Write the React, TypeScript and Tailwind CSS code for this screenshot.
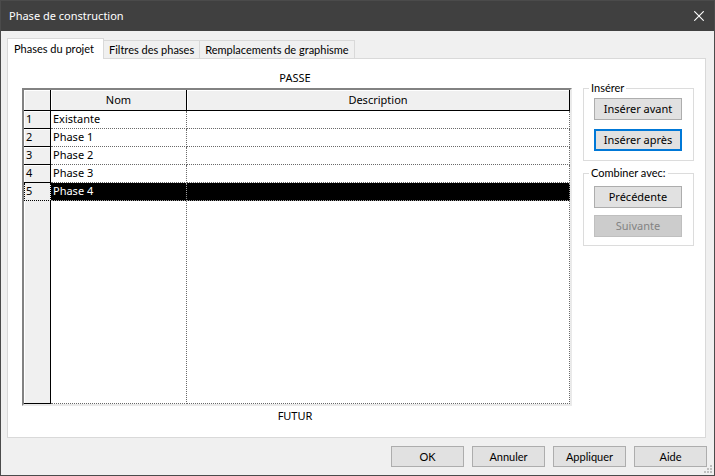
import { useState } from 'react'
import clsx from 'clsx'

const TABS = ['Phases du projet', 'Filtres des phases', 'Remplacements de graphisme']

const PHASES = [
  { name: 'Existante', description: '' },
  { name: 'Phase 1', description: '' },
  { name: 'Phase 2', description: '' },
  { name: 'Phase 3', description: '' },
  { name: 'Phase 4', description: '' },
]

interface DialogButtonProps {
  label: string
  className?: string
  focused?: boolean
  disabled?: boolean
}

function DialogButton({ label, className, focused, disabled }: DialogButtonProps) {
  return (
    <button
      type="button"
      disabled={disabled}
      className={clsx(
        'flex items-center justify-center bg-[#e1e1e1] whitespace-nowrap disabled:border-[#bfbfbf] disabled:bg-[#cccccc] disabled:text-[#838383]',
        focused ? 'border-2 border-[#0078d7]' : 'border border-[#adadad]',
        className,
      )}
    >
      {label}
    </button>
  )
}

function PhaseTable() {
  const [selected, setSelected] = useState(4)

  return (
    <div className="min-h-0 flex-1 border-2 border-t-[#828282] border-r-[#eaeaea] border-b-[#eaeaea] border-l-[#828282]">
      <table className="h-full w-full table-fixed border-separate border-spacing-0">
        <colgroup>
          <col className="w-[27px]" />
          <col className="w-[136px]" />
          <col />
        </colgroup>
        <thead>
          <tr className="h-[21px] bg-[#f0f0f0]">
            <td className="border-r border-b border-black shadow-[inset_1px_1px_0_white]" />
            <th scope="col" className="border-r border-b border-black p-0 font-normal shadow-[inset_1px_1px_0_white]">
              Nom
            </th>
            <th scope="col" className="border-r border-b border-black p-0 font-normal shadow-[inset_1px_1px_0_white]">
              Description
            </th>
          </tr>
        </thead>
        <tbody>
          {PHASES.map((phase, i) => {
            const active = i === selected
            return (
              <tr key={phase.name} onClick={() => setSelected(i)} className="h-[18px] align-top">
                <th
                  scope="row"
                  className={clsx(
                    'border-r border-b border-black bg-[#f0f0f0] p-0 text-left font-normal',
                    active ? 'border-l border-dotted pl-px' : 'pl-0.5 shadow-[inset_1px_1px_0_white]',
                  )}
                >
                  {i + 1}
                </th>
                <td
                  className={clsx(
                    'border-r border-b border-dotted p-0 pl-0.5',
                    active ? 'border-[#a0a0a0] bg-black text-white' : 'border-[#696969]',
                  )}
                >
                  {phase.name}
                </td>
                <td
                  className={clsx(
                    'border-r border-b border-dotted p-0 pl-0.5',
                    active ? 'border-[#a0a0a0] bg-black text-white' : 'border-[#696969]',
                  )}
                >
                  {phase.description}
                </td>
              </tr>
            )
          })}
          {/* empty area under the last phase */}
          <tr>
            <td className="border-r border-b border-black bg-[#f0f0f0] shadow-[inset_1px_0_0_white]" />
            <td className="border-r border-b border-dotted border-[#696969]" />
            <td className="border-r border-b border-dotted border-[#696969]" />
          </tr>
        </tbody>
      </table>
    </div>
  )
}

export default function App() {
  const [tab, setTab] = useState(0)

  return (
    <div className="relative flex h-screen flex-col border border-[#4b4b4b] bg-[#f0f0f0] font-['Noto_Sans','Open_Sans',sans-serif] text-[11px] leading-4 text-black">
      {/* Title bar */}
      <header className="flex h-[30px] shrink-0 items-center justify-between bg-[#404040] pr-2.5 pl-2 text-white">
        <h1>Phase de construction</h1>
        <button type="button" aria-label="Fermer">
          <svg width="10" height="10" viewBox="0 0 10 10" fill="none" stroke="currentColor" strokeWidth="1.1">
            <path d="M0.3 0.3L9.7 9.7M9.7 0.3L0.3 9.7" />
          </svg>
        </button>
      </header>

      <main className="flex min-h-0 flex-1 flex-col pt-[7px] pr-2 pl-1.5">
        <div role="tablist" className="z-10 flex items-end font-['Lato',sans-serif]">
          {TABS.map((label, i) => (
            <button
              key={label}
              type="button"
              role="tab"
              aria-selected={tab === i}
              onClick={() => setTab(i)}
              className={clsx(
                'border-t border-r border-[#d9d9d9] whitespace-nowrap',
                i === 0 && 'border-l',
                tab === i ? '-mb-px h-[21px] bg-white pr-[9px] pl-1.5' : 'h-[18px] px-[5px]',
              )}
            >
              {label}
            </button>
          ))}
        </div>

        <div role="tabpanel" className="flex min-h-0 flex-1 gap-[11px] border border-[#d9d9d9] bg-white pt-[11px] pr-[11px] pl-3.5">
          <section className="flex min-w-0 flex-1 flex-col pb-[13px]">
            <p className="mb-0.5 pr-1 text-center">PASSE</p>
            <PhaseTable />
            <p className="mt-0.5 pr-1 text-center">FUTUR</p>
          </section>

          <aside className="flex w-[111px] flex-col gap-1 pt-2.5">
            <fieldset className="border border-[#dcdcdc] pt-0.5 pr-[11px] pb-[9px] pl-2.5">
              <legend className="-ml-[5px] px-0.5 font-['Lato',sans-serif]">Insérer</legend>
              <div className="flex flex-col gap-[9px]">
                <DialogButton label="Insérer avant" className="h-[22px]" />
                <DialogButton label="Insérer après" className="h-[22px]" focused />
              </div>
            </fieldset>
            <fieldset className="border border-[#dcdcdc] pt-[5px] pr-[11px] pb-2 pl-2.5">
              <legend className="-ml-[5px] px-0.5 font-['Lato',sans-serif]">Combiner avec:</legend>
              <div className="flex flex-col gap-[7px]">
                <DialogButton label="Précédente" className="h-[22px]" />
                <DialogButton label="Suivante" className="h-[22px]" disabled />
              </div>
            </fieldset>
          </aside>
        </div>
      </main>

      <footer className="flex justify-end gap-2 pt-2 pr-[7px] pb-2 font-['Lato',sans-serif]">
        {['OK', 'Annuler', 'Appliquer', 'Aide'].map((label) => (
          <DialogButton key={label} label={label} className="h-[21px] w-[73px]" />
        ))}
      </footer>

      {/* Resize grip */}
      <svg className="absolute right-0.5 bottom-0.5" width="8" height="8" viewBox="0 0 8 8" fill="#bfbfbf" aria-hidden="true">
        <path d="M6 0h2v2h-2zM3 3h2v2h-2zM6 3h2v2h-2zM0 6h2v2h-2zM3 6h2v2h-2zM6 6h2v2h-2z" />
      </svg>
    </div>
  )
}
